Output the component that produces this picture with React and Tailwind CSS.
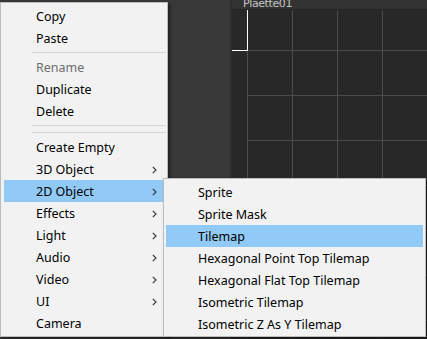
import React from "react";

const mainItems = [
  { label: "Copy" },
  { label: "Paste" },
  { sep: true },
  { label: "Rename", disabled: true },
  { label: "Duplicate" },
  { label: "Delete" },
  { sep: true },
  { sep: true },
  { label: "Create Empty" },
  { label: "3D Object", sub: true },
  { label: "2D Object", sub: true, active: true },
  { label: "Effects", sub: true },
  { label: "Light", sub: true },
  { label: "Audio", sub: true },
  { label: "Video", sub: true },
  { label: "UI", sub: true },
  { label: "Camera" },
];

const subItems = [
  { label: "Sprite" },
  { label: "Sprite Mask" },
  { label: "Tilemap", active: true },
  { label: "Hexagonal Point Top Tilemap" },
  { label: "Hexagonal Flat Top Tilemap" },
  { label: "Isometric Tilemap" },
  { label: "Isometric Z As Y Tilemap" },
];

const Chevron = () => (
  <svg width="5" height="8" viewBox="0 0 5 8" className="shrink-0">
    <polyline points="0.8,0.8 4,4 0.8,7.2" fill="none" stroke="#3a3a3a" strokeWidth="1.2" />
  </svg>
);

const MenuRow = ({ item }) => {
  if (item.sep) {
    return (
      <div className="h-[7px] flex items-center pl-[28px] mr-[-2px]">
        <div className="h-px w-full bg-[#d7d7d7]" />
      </div>
    );
  }
  return (
    <div
      className={`h-[22px] flex items-center justify-between pt-[2px] pl-[32px] pr-[7px] ${
        item.active ? "bg-[#91c9f7]" : ""
      } ${item.disabled ? "text-[#6d6d6d]" : "text-black"}`}
    >
      <span>{item.label}</span>
      {item.sub && <Chevron />}
    </div>
  );
};

const Grid = () => {
  const xs = [15.5, 60.5, 105.5, 150.5];
  const ys = [40.5, 85.5, 130.5, 175.5, 220.5, 265.5, 310.5];
  return (
    <svg width="195" height="328" className="block">
      {xs.map((x) => (
        <line key={"v" + x} x1={x} y1="0" x2={x} y2="328" stroke="#4c4c4c" strokeWidth="1" />
      ))}
      {ys.map((y) => (
        <line key={"h" + y} x1="16" y1={y} x2="195" y2={y} stroke="#4c4c4c" strokeWidth="1" />
      ))}
      <line x1="15.5" y1="0" x2="15.5" y2="41" stroke="#ffffff" strokeWidth="1" />
      <line x1="0" y1="40.5" x2="16" y2="40.5" stroke="#ffffff" strokeWidth="1" />
    </svg>
  );
};

export default function App() {
  return (
    <div
      className="relative w-[427px] h-[339px] overflow-hidden bg-[#383838] flex"
      style={{ fontFamily: '"Noto Sans", "Open Sans", sans-serif' }}
    >
      {/* editor background */}
      <div className="w-[230px] bg-[#383838]" />
      <div className="w-[2px] bg-[#2d2d2d]" />
      <div className="flex-1 flex flex-col">
        <div className="h-[10px] bg-[#333333] overflow-hidden border-b border-[#232323] pl-[11px]">
          <div
            className="text-[11px] leading-[11px] mt-[-2px] text-[#c4c4c4] tracking-[-0.4px]"
            style={{ fontFamily: '"DejaVu Sans", sans-serif' }}
          >
            Plaette01
          </div>
        </div>
        <div className="flex-1 bg-[#282828] overflow-hidden">
          <Grid />
        </div>
      </div>

      {/* context menu */}
      <div className="absolute left-0 top-[2px] w-[168px] bg-[#f2f2f2] border border-[#bcbcbc] px-[3px] py-[2px] text-[12.5px] shadow-[2px_2px_3px_rgba(0,0,0,0.45)]">
        {mainItems.map((item, i) => (
          <MenuRow key={i} item={item} />
        ))}
      </div>

      {/* submenu */}
      <div className="absolute left-[163px] top-[178px] w-[263px] bg-[#f2f2f2] border border-[#bcbcbc] px-[2px] pt-[2px] pb-[1px] text-[12.5px] shadow-[2px_2px_3px_rgba(0,0,0,0.45)]">
        {subItems.map((item, i) => (
          <MenuRow key={i} item={item} />
        ))}
      </div>
    </div>
  );
}
